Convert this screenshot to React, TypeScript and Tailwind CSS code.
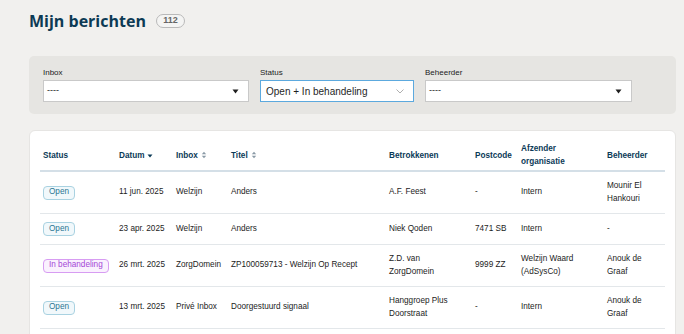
import React from "react";

const rows = [
  {
    status: "Open",
    datum: "11 jun. 2025",
    inbox: "Welzijn",
    titel: "Anders",
    betrokkenen: "A.F. Feest",
    postcode: "-",
    afzender: "Intern",
    beheerder: "Mounir El Hankouri",
  },
  {
    status: "Open",
    datum: "23 apr. 2025",
    inbox: "Welzijn",
    titel: "Anders",
    betrokkenen: "Niek Qoden",
    postcode: "7471 SB",
    afzender: "Intern",
    beheerder: "-",
  },
  {
    status: "In behandeling",
    datum: "26 mrt. 2025",
    inbox: "ZorgDomein",
    titel: "ZP100059713 - Welzijn Op Recept",
    betrokkenen: "Z.D. van ZorgDomein",
    postcode: "9999 ZZ",
    afzender: "Welzijn Waard (AdSysCo)",
    beheerder: "Anouk de Graaf",
  },
  {
    status: "Open",
    datum: "13 mrt. 2025",
    inbox: "Privé Inbox",
    titel: "Doorgestuurd signaal",
    betrokkenen: "Hanggroep Plus Doorstraat",
    postcode: "-",
    afzender: "Intern",
    beheerder: "Anouk de Graaf",
  },
];

function Caret() {
  return (
    <svg width="7" height="5" viewBox="0 0 7 5" className="inline-block">
      <path d="M0.5 0.5h6L3.5 4.5z" fill="#1f1f1f" />
    </svg>
  );
}

function SortDown() {
  return (
    <svg width="6" height="6" viewBox="0 0 6 6" className="inline-block ml-[3px] mt-[2px]">
      <path d="M0.5 1.5h5L3 4.5z" fill="#0b3a57" />
    </svg>
  );
}

function SortBoth() {
  return (
    <svg width="6" height="8" viewBox="0 0 6 8" className="inline-block ml-[3px]">
      <path d="M0.8 3.3h4.4L3 0.8z" fill="#8a9aa6" />
      <path d="M0.8 4.7h4.4L3 7.2z" fill="#8a9aa6" />
    </svg>
  );
}

function Badge({ status }: { status: string }) {
  const purple = status === "In behandeling";
  return (
    <span
      className={`inline-flex items-center h-[14px] px-[5px] rounded-[4px] border text-[8.2px] leading-none ${
        purple
          ? "border-[#d79cf2] bg-[#faf1fe] text-[#a447d6]"
          : "border-[#a9d2e1] bg-[#f1f8fb] text-[#2b7694]"
      }`}
    >
      {status}
    </span>
  );
}

export default function App() {
  return (
    <div
      className="h-[334px] overflow-hidden bg-[#f1f0ee] pl-[29px] pr-[8px]"
      style={{ fontFamily: '"Liberation Sans", Arial, sans-serif' }}
    >
      {/* Title */}
      <div className="flex items-center h-[41px] pt-[1px] gap-[10px]">
        <h1
          className="text-[16px] font-bold text-[#0c3a54]"
          style={{ fontFamily: '"Open Sans", sans-serif' }}
        >
          Mijn berichten
        </h1>
        <span className="inline-flex items-center justify-center h-[14px] w-[29px] rounded-full border border-[#b9b9b9] bg-[#f4f4f3] text-[9px] font-bold text-[#666]">
          112
        </span>
      </div>

      {/* Filters */}
      <div className="mt-[15px] h-[58px] rounded-[5px] bg-[#e6e5e2] pl-[14px] pt-[12px] flex gap-[11px]">
        <div className="w-[206px]">
          <div className="text-[8px] text-[#222] h-[12px] leading-[10px]">Inbox</div>
          <div className="h-[22px] bg-white border border-[#c9c9c9] flex items-center justify-between pl-[3px] pr-[9px] text-[9px] text-[#222]">
            <span>----</span>
            <Caret />
          </div>
        </div>
        <div className="w-[154px]">
          <div className="text-[8px] text-[#222] h-[12px] leading-[10px]">Status</div>
          <div className="h-[22px] bg-white border border-[#5ca9de] flex items-center justify-between pl-[5px] pr-[9px] text-[10px] text-[#1f1f1f]">
            <span>Open + In behandeling</span>
            <svg width="8" height="5" viewBox="0 0 8 5">
              <path d="M0.5 0.5L4 4l3.5-3.5" fill="none" stroke="#9a9a9a" strokeWidth="0.8" />
            </svg>
          </div>
        </div>
        <div className="w-[207px]">
          <div className="text-[8px] text-[#222] h-[12px] leading-[10px]">Beheerder</div>
          <div className="h-[22px] bg-white border border-[#c9c9c9] flex items-center justify-between pl-[3px] pr-[9px] text-[9px] text-[#222]">
            <span>----</span>
            <Caret />
          </div>
        </div>
      </div>

      {/* Table card */}
      <div className="mt-[16px] bg-white rounded-[6px] border border-[#e6e5e3] px-[10px] pt-[9px] pb-[30px]">
        <table className="w-full table-fixed border-collapse text-[8.2px] text-[#1c1c1c] leading-[12.5px]">
          <colgroup>
            <col className="w-[76px]" />
            <col className="w-[57px]" />
            <col className="w-[55px]" />
            <col className="w-[158px]" />
            <col className="w-[86px]" />
            <col className="w-[46px]" />
            <col className="w-[86px]" />
            <col className="w-[61px]" />
          </colgroup>
          <thead>
            <tr className="border-b-2 border-[#d4dfe7] text-[#0b3a57] font-bold text-left leading-[13px]">
              <th className="px-[3px] py-[2px] align-middle">Status</th>
              <th className="px-[3px] py-[2px] align-middle">
                <span className="inline-flex items-center">
                  Datum
                  <SortDown />
                </span>
              </th>
              <th className="px-[3px] py-[2px] align-middle">
                <span className="inline-flex items-center">
                  Inbox
                  <SortBoth />
                </span>
              </th>
              <th className="px-[3px] py-[2px] align-middle">
                <span className="inline-flex items-center">
                  Titel
                  <SortBoth />
                </span>
              </th>
              <th className="px-[3px] py-[2px] align-middle">Betrokkenen</th>
              <th className="px-[3px] py-[2px] align-middle">Postcode</th>
              <th className="px-[3px] py-[2px] align-middle">
                Afzender organisatie
              </th>
              <th className="px-[3px] py-[2px] align-middle">Beheerder</th>
            </tr>
          </thead>
          <tbody>
            {rows.map((r, i) => (
              <tr key={i} className="border-b border-[#e3e7ea]">
                <td className="px-[3px] py-[8px] align-middle">
                  <Badge status={r.status} />
                </td>
                <td className="px-[3px] py-[8px] align-middle whitespace-nowrap">{r.datum}</td>
                <td className="px-[3px] py-[8px] align-middle whitespace-nowrap">{r.inbox}</td>
                <td className="px-[3px] py-[8px] align-middle whitespace-nowrap overflow-hidden">
                  {r.titel}
                </td>
                <td className="pl-[3px] pr-[12px] py-[8px] align-middle">{r.betrokkenen}</td>
                <td className="px-[3px] py-[8px] align-middle whitespace-nowrap">{r.postcode}</td>
                <td className="px-[3px] py-[8px] align-middle">{r.afzender}</td>
                <td className="px-[3px] py-[8px] align-middle">{r.beheerder}</td>
              </tr>
            ))}
          </tbody>
        </table>
      </div>
    </div>
  );
}
